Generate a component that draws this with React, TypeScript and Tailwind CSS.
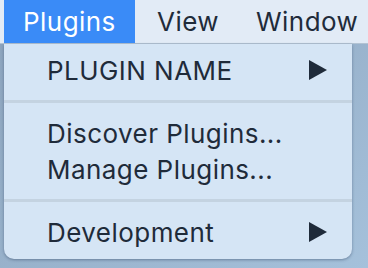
import React from 'react';

const font = { fontFamily: 'Inter, "Liberation Sans", sans-serif' };

function Arrow() {
  return (
    <svg className="w-[18px] h-[20px] text-[#1f2b3a]" viewBox="0 0 18 20" fill="currentColor">
      <polygon points="0,0 18,10 0,20" />
    </svg>
  );
}

function Item({ label, sub }: { label: string; sub?: boolean }) {
  return (
    <div className="flex items-center justify-between h-[36px] pl-[43px] pr-[25px]">
      <span>{label}</span>
      {sub && <Arrow />}
    </div>
  );
}

function Separator() {
  return (
    <div className="py-[12px]">
      <div className="h-[3px] bg-[#c4d3e1]" />
    </div>
  );
}

export default function App() {
  return (
    <div
      className="w-[368px] h-[268px] overflow-hidden bg-gradient-to-br from-[#8ba2bb] to-[#a5c1db] text-[26px] tracking-[0.45px] text-[#1f2b3a]"
      style={font}
    >
      {/* menu bar */}
      <div className="flex items-center h-[44px] bg-[#e2ebf6] border-b border-[#b3c3d3]">
        <div className="ml-[4px] h-full w-[131px] flex items-center pl-[19px] bg-[#3a8bf7] text-white">
          Plugins
        </div>
        <div className="ml-[22px]">View</div>
        <div className="ml-[37px]">Window</div>
      </div>

      {/* dropdown */}
      <div className="ml-[4px] w-[348px] bg-[#d5e5f5] rounded-b-[10px] pt-[8px] pb-[9px] shadow-[0_1px_3px_rgba(40,60,90,0.45)]">
        <Item label="PLUGIN NAME" sub />
        <Separator />
        <Item label="Discover Plugins..." />
        <Item label="Manage Plugins..." />
        <Separator />
        <Item label="Development" sub />
      </div>
    </div>
  );
}
